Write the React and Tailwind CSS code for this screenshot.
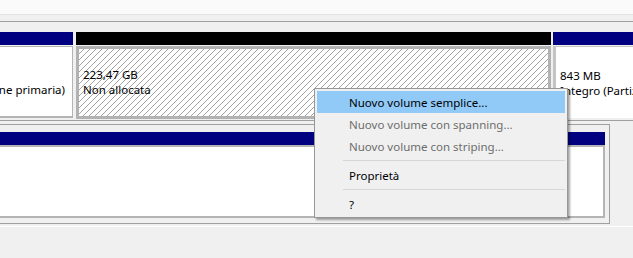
import React from 'react';

const hatch =
  'bg-[repeating-linear-gradient(135deg,#ffffff_0px,#ffffff_3.3px,#a3a3a3_3.3px,#a3a3a3_4.24px)]';

const MenuItem = ({ label, active, disabled }) => (
  <div
    className={
      'h-[22px] flex items-center pl-[32px] ' +
      (active ? 'bg-[#91c9f7] ' : '') +
      (disabled ? 'text-[#6d6d6d]' : 'text-black')
    }
  >
    {label}
  </div>
);

const Separator = () => (
  <div className="h-[7px] flex items-center pl-[26px]">
    <div className="h-px w-full bg-[#d7d7d7]" />
  </div>
);

const App = () => {
  return (
    <div className="relative w-[633px] h-[258px] overflow-hidden bg-[#f0f0f0] font-['Noto_Sans',sans-serif] text-[11.5px] leading-[15px]">
      {/* top strip of the previous disk */}
      <div className="h-[15px] bg-[#fafafa] border-b border-[#e4e4e4]" />
      <div className="h-[6px]" />

      {/* Disk 1 */}
      <div className="border-t border-b border-[#a0a0a0] pt-[10px] h-[100px]">
        <div className="flex h-[87px]">
          {/* left partition, cut off */}
          <div className="w-[73px] shrink-0 flex flex-col">
            <div className="h-[13px] bg-[#000080]" />
            <div className="mt-[1px] h-[72px] bg-white border-t border-r border-b-2 border-[#b4b4b4] flex items-center justify-end pr-[7px] overflow-hidden">
              <div className="whitespace-nowrap text-left">
                <div>&nbsp;</div>
                <div>Integro (Partizione primaria)</div>
              </div>
            </div>
          </div>

          {/* unallocated */}
          <div className="w-[475px] shrink-0 ml-[3px] flex flex-col">
            <div className="h-[13px] bg-black" />
            <div className="mt-[1px] h-[74px] border-[3px] border-[#b2b2b2] bg-white">
              <div className={'h-full flex items-center pl-[4px] ' + hatch}>
                <div className="whitespace-nowrap">
                  <div>223,47 GB</div>
                  <div>Non allocata</div>
                </div>
              </div>
            </div>
          </div>

          {/* right partition */}
          <div className="w-[90px] shrink-0 ml-[2px] flex flex-col">
            <div className="h-[13px] bg-[#000080]" />
            <div className="mt-[1px] h-[72px] bg-white border-t border-l-[3px] border-[#c4c4c4] flex items-center pl-[4px] overflow-hidden">
              <div className="whitespace-nowrap">
                <div>843 MB</div>
                <div>Integro (Partizione primaria)</div>
              </div>
            </div>
          </div>
        </div>
      </div>

      <div className="h-[3px]" />

      {/* Disk 2 */}
      <div className="w-[610px] h-[100px] border-t border-r border-b border-[#a0a0a0] pt-[7px]">
        <div className="w-[605px] h-[13px] bg-[#000080]" />
        <div className="w-[605px] h-[73px] bg-white border-t-2 border-r-2 border-b-2 border-[#b4b4b4]" />
      </div>
      <div className="h-[2px]" />
      <div className="h-px bg-white" />

      {/* context menu */}
      <div className="absolute left-[314px] top-[88px] w-[254px] h-[130px] bg-[#f0f0f0] border border-[#979797] p-[2px] shadow-[2px_2px_2px_rgba(0,0,0,0.35)]">
        <MenuItem label="Nuovo volume semplice..." active />
        <MenuItem label="Nuovo volume con spanning..." disabled />
        <MenuItem label="Nuovo volume con striping..." disabled />
        <Separator />
        <MenuItem label="Proprietà" />
        <Separator />
        <MenuItem label="?" />
      </div>
    </div>
  );
};

export default App;
